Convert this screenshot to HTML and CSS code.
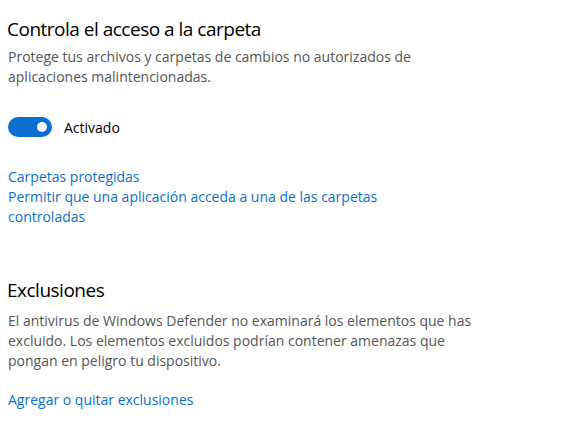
FILE: index.html
```html
<!DOCTYPE html>
<html lang="es">
<head>
<meta charset="utf-8">
<link rel="stylesheet" href="styles.css">
</head>
<body>
<main class="page">
  <section class="section section-first">
    <h1 class="title">Controla el acceso a la carpeta</h1>
    <p class="desc">Protege tus archivos y carpetas de cambios no autorizados de<br>aplicaciones malintencionadas.</p>
    <div class="toggle-row">
      <span class="toggle"><span class="knob"></span></span>
      <span class="toggle-label">Activado</span>
    </div>
    <div class="links">
      <a class="link" href="#">Carpetas protegidas</a>
      <a class="link" href="#">Permitir que una aplicación acceda a una de las carpetas<br>controladas</a>
    </div>
  </section>
  <section class="section section-second">
    <h2 class="title">Exclusiones</h2>
    <p class="desc desc-2">El antivirus de Windows Defender no examinará los elementos que has<br>excluido. Los elementos excluidos podrían contener amenazas que<br>pongan en peligro tu dispositivo.</p>
    <div class="links links-2">
      <a class="link" href="#">Agregar o quitar exclusiones</a>
    </div>
  </section>
</main>
</body>
</html>
```

FILE: styles.css
```css
html, body {
  margin: 0;
  padding: 0;
  background: #ffffff;
}
body {
  font-family: "Open Sans", "Noto Sans", sans-serif;
  color: #000;
}
.page {
  padding-left: 8px;
  display: flex;
  flex-direction: column;
}
.section {
  display: flex;
  flex-direction: column;
}
.section-first {
  padding-top: 15px;
}
.section-second {
  padding-top: 49px;
}
.title {
  margin: 0;
  margin-left: -1px;
  font-size: 19px;
  letter-spacing: -0.5px;
  line-height: 28px;
  font-weight: 400;
  color: #000;
}
.desc {
  margin: 4px 0 0;
  font-size: 14px;
  line-height: 20px;
  color: #555555;
}
.desc-2 {
  margin-top: 7px;
}
.toggle-row {
  margin-top: 30px;
  display: flex;
  align-items: center;
  height: 20px;
}
.toggle {
  width: 44px;
  height: 20px;
  border-radius: 10px;
  background: #0a70d0;
  display: flex;
  align-items: center;
  justify-content: flex-end;
  padding-right: 5px;
  box-sizing: border-box;
}
.knob {
  width: 10px;
  height: 10px;
  border-radius: 50%;
  background: #fff;
}
.toggle-label {
  margin-left: 12px;
  font-size: 14px;
  color: #000;
}
.links {
  margin-top: 30px;
  display: flex;
  flex-direction: column;
}
.links-2 {
  margin-top: 19px;
}
.link {
  font-size: 14px;
  line-height: 20px;
  color: #0a6fcc;
  text-decoration: none;
}
```
